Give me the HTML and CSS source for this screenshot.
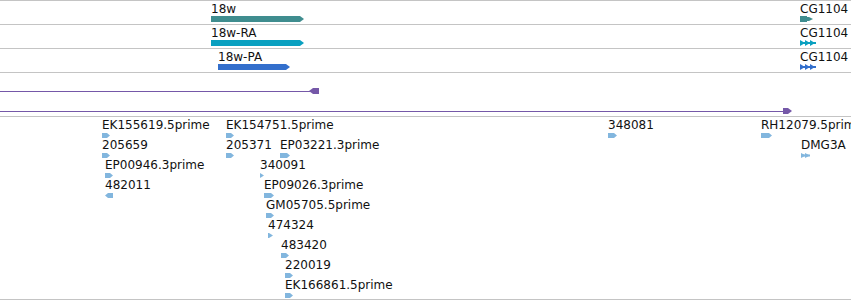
FILE: index.html
```html
<!DOCTYPE html>
<html>
<head>
<meta charset="utf-8">
<link rel="stylesheet" href="styles.css">
</head>
<body>
<div class="tracks">
  <div class="track track-gene">
    <div class="feat" style="left:211px;top:1px"><span class="lbl">18w</span>
      <svg class="g teal" width="93" height="6"><path d="M0 0H89L93 3L89 6H0Z"/></svg></div>
    <div class="feat" style="left:800px;top:1px"><span class="lbl">CG1104</span>
      <svg class="g teal" width="13" height="6"><path d="M0 0H7V1H9L13 3L9 5H7V6H0Z"/></svg></div>
  </div>
  <div class="track track-gene">
    <div class="feat" style="left:211px;top:1px"><span class="lbl">18w-RA</span>
      <svg class="g cyan" width="93" height="6"><path d="M0 0H89L93 3L89 6H0Z"/></svg></div>
    <div class="feat" style="left:800px;top:1px"><span class="lbl">CG1104</span>
      <svg class="g cyan" width="17" height="6"><path d="M0 2H16V4H0Z"/><path d="M0 0L5 3L0 6Z"/><path d="M5 0L10 3L5 6Z"/><path d="M10 0L15 3L10 6Z"/></svg></div>
  </div>
  <div class="track track-gene">
    <div class="feat" style="left:218px;top:1px"><span class="lbl">18w-PA</span>
      <svg class="g blue" width="72" height="6"><path d="M0 0H68L72 3L68 6H0Z"/></svg></div>
    <div class="feat" style="left:800px;top:1px"><span class="lbl">CG1104</span>
      <svg class="g blue" width="17" height="6"><path d="M0 2H16V4H0Z"/><path d="M0 0L5 3L0 6Z"/><path d="M5 0L10 3L5 6Z"/><path d="M10 0L15 3L10 6Z"/></svg></div>
  </div>
  <div class="track track-purple">
    <svg class="purple" width="851" height="43">
      <path class="ln" d="M0 18.5H310"/>
      <path d="M309 18L313 15H319V21H313Z"/>
      <path class="ln" d="M0 38.5H784"/>
      <path d="M783 35H788L792 38L788 41H783Z"/>
    </svg>
  </div>
  <div class="track track-est">
    <div class="feat" style="left:102px;top:1px"><span class="lbl">EK155619.5prime</span>
      <svg class="g est" width="8" height="5"><path d="M0 0H5L8 2.5L5 5H0Z"/></svg></div>
    <div class="feat" style="left:226px;top:1px"><span class="lbl">EK154751.5prime</span>
      <svg class="g est" width="8" height="5"><path d="M0 0H5L8 2.5L5 5H0Z"/></svg></div>
    <div class="feat" style="left:608px;top:1px"><span class="lbl">348081</span>
      <svg class="g est" width="9" height="5"><path d="M0 0H6L9 2.5L6 5H0Z"/></svg></div>
    <div class="feat" style="left:761px;top:1px"><span class="lbl">RH12079.5prime</span>
      <svg class="g est" width="11" height="5"><path d="M0 0H8L11 2.5L8 5H0Z"/></svg></div>

    <div class="feat" style="left:102px;top:21px"><span class="lbl">205659</span>
      <svg class="g est" width="8" height="5"><path d="M0 0H5L8 2.5L5 5H0Z"/></svg></div>
    <div class="feat" style="left:226px;top:21px"><span class="lbl">205371</span>
      <svg class="g est" width="8" height="5"><path d="M0 0H5L8 2.5L5 5H0Z"/></svg></div>
    <div class="feat" style="left:280px;top:21px"><span class="lbl">EP03221.3prime</span>
      <svg class="g est" width="10" height="5"><path d="M0 0H7L10 2.5L7 5H0Z"/></svg></div>
    <div class="feat" style="left:801px;top:21px"><span class="lbl">DMG3A</span>
      <svg class="g est" width="10" height="5"><path d="M0 1.5H9V3.5H0Z"/><path d="M0 0L5 2.5L0 5Z"/><path d="M4 0L9 2.5L4 5Z"/></svg></div>

    <div class="feat" style="left:105px;top:41px"><span class="lbl">EP00946.3prime</span>
      <svg class="g est" width="8" height="5"><path d="M0 0H5L8 2.5L5 5H0Z"/></svg></div>
    <div class="feat" style="left:260px;top:41px"><span class="lbl">340091</span>
      <svg class="g est" width="4" height="5"><path d="M0 0L4 2.5L0 5Z"/></svg></div>

    <div class="feat" style="left:105px;top:61px"><span class="lbl">482011</span>
      <svg class="g est" width="8" height="5"><path d="M0 2.5L3 0H8V5H3Z"/></svg></div>
    <div class="feat" style="left:264px;top:61px"><span class="lbl">EP09026.3prime</span>
      <svg class="g est" width="10" height="5"><path d="M0 0H7L10 2.5L7 5H0Z"/></svg></div>

    <div class="feat" style="left:266px;top:81px"><span class="lbl">GM05705.5prime</span>
      <svg class="g est" width="8" height="5"><path d="M0 0H5L8 2.5L5 5H0Z"/></svg></div>
    <div class="feat" style="left:268px;top:101px"><span class="lbl">474324</span>
      <svg class="g est" width="5" height="5"><path d="M0 0H1L5 2.5L1 5H0Z"/></svg></div>
    <div class="feat" style="left:281px;top:121px"><span class="lbl">483420</span>
      <svg class="g est" width="8" height="5"><path d="M0 0H5L8 2.5L5 5H0Z"/></svg></div>
    <div class="feat" style="left:285px;top:141px"><span class="lbl">220019</span>
      <svg class="g est" width="8" height="5"><path d="M0 0H5L8 2.5L5 5H0Z"/></svg></div>
    <div class="feat" style="left:285px;top:161px"><span class="lbl">EK166861.5prime</span>
      <svg class="g est" width="8" height="5"><path d="M0 0H5L8 2.5L5 5H0Z"/></svg></div>
  </div>
</div>
</body>
</html>
```

FILE: styles.css
```css
html, body {
  margin: 0;
  padding: 0;
  background: #ffffff;
  overflow: hidden;
}

body {
  font-family: "DejaVu Sans", Verdana, sans-serif;
  font-size: 12px;
  color: #111111;
}

.tracks {
  width: 851px;
  border-top: 1px solid #c4c4c4;
}

.track {
  position: relative;
  overflow: hidden;
  border-bottom: 1px solid #c4c4c4;
}

.track-gene { height: 23px; }
.track-purple { height: 43px; }
.track-est { height: 182px; }

.feat {
  position: absolute;
  display: flex;
  flex-direction: column;
  align-items: flex-start;
}

.lbl {
  display: block;
  height: 14px;
  line-height: 14px;
  white-space: nowrap;
}

.track-est .feat { gap: 1px; }

.g { display: block; }

.teal { fill: #3f8d8f; }
.cyan { fill: #0aa0c0; }
.blue { fill: #336fcc; }
.est  { fill: #82b6de; }

.purple { display: block; fill: #7558a8; }
.purple .ln {
  fill: none;
  stroke: #7558a8;
  stroke-width: 1;
}
```
